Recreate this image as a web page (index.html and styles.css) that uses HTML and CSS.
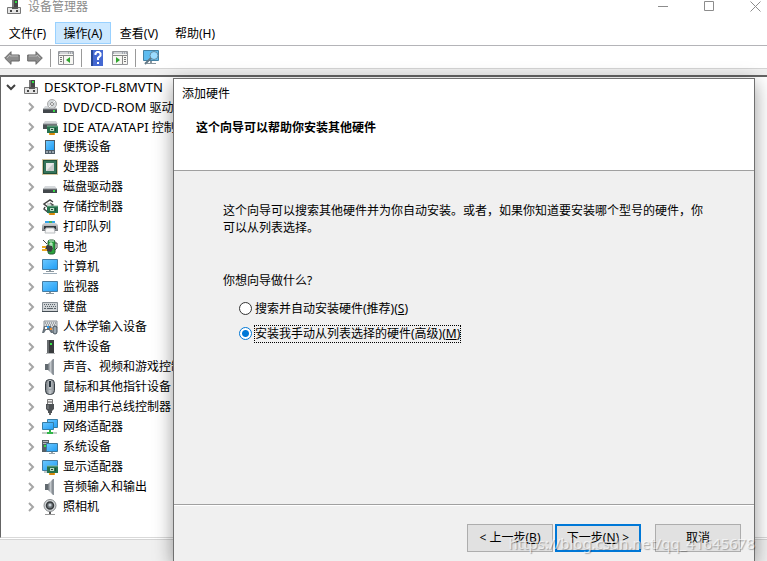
FILE: index.html
```html
<!DOCTYPE html>
<html lang="zh-CN">
<head>
<meta charset="utf-8">
<title>设备管理器</title>
<link rel="stylesheet" href="styles.css">
</head>
<body>
<svg class="defs" aria-hidden="true">
  <defs>
    <linearGradient id="blue" x1="0" y1="0" x2="1" y2="1"><stop offset="0" stop-color="#6cc8ff"/><stop offset="1" stop-color="#1f9df5"/></linearGradient>
    <linearGradient id="grey" x1="0" y1="0" x2="0" y2="1"><stop offset="0" stop-color="#d4d6d8"/><stop offset="1" stop-color="#777b7f"/></linearGradient>
    <linearGradient id="metal" x1="0" y1="0" x2="1" y2="0"><stop offset="0" stop-color="#6c7278"/><stop offset=".5" stop-color="#c3c8cc"/><stop offset="1" stop-color="#7c8288"/></linearGradient>
    <symbol id="closed" viewBox="0 0 8 10"><path d="M2 1l4 4-4 4" fill="none" stroke="#a6a6a6" stroke-width="2"/></symbol>
    <symbol id="open" viewBox="0 0 10 8"><path d="M1 2l4 4 4-4" fill="none" stroke="#404040" stroke-width="2"/></symbol>
    <symbol id="computer" viewBox="0 0 16 16"><path d="M6 1h6v9H6z" fill="#454545"/><path d="M6 1h2v9H6z" fill="#777"/><path d="M9 2h2v2H9z" fill="#2fdc42"/><path d="M1.500 8.500h13v6h-13z" fill="#e4e4e4" stroke="#777"/><path d="M6 8h6v2H6z" fill="#555"/><path d="M4 11h2v2H4zM10 11h2v2h-2z" fill="#444"/></symbol>
    <symbol id="drive" viewBox="0 0 16 16"><path d="M3 7h10l2 3H1z" fill="#d6d9dc"/><path d="M1 10h14v4H1z" fill="#42474b"/><path d="M1 10h14" stroke="#8a8e91"/><path d="M11 11h2v2h-2z" fill="#35db47"/></symbol>
    <symbol id="card" viewBox="0 0 16 16"><path d="M5 6h11v7H5z" fill="#27734f"/><path d="M5 6h11" stroke="#87b99c"/><path d="M8 8h4v3H8z" fill="#b9d9c4"/><path d="M9 9h2v1H9zM13 8h1v3h-1z" fill="#194e37"/><path d="M7 13h6v2H7z" fill="#f2a51a"/><path d="M9 13v2m2-2v2" stroke="#b96a08"/></symbol>
    <symbol id="dvd" viewBox="0 0 16 16"><use href="#drive"/><circle cx="10" cy="5" r="4.500" fill="#d4d8da" stroke="#aaa"/><path d="M10 5l3-3M10 5l-3 3" stroke="#fff"/><circle cx="10" cy="5" r="1.500" fill="#fff" stroke="#888"/></symbol>
    <symbol id="ide" viewBox="0 0 16 16"><path d="M3 2h11l2 3H1z" fill="#d2d5d7"/><path d="M1 5h14v5H1z" fill="#4b5154"/><path d="M1 5h14" stroke="#979b9e"/><use href="#card" y="1"/></symbol>
    <symbol id="portable" viewBox="0 0 16 16"><path d="M3 1h10v14H3z" fill="#4e5c67"/><path d="M4 2h8v9H4z" fill="url(#blue)"/><path d="M4 12h2v2H4zM7 12h2v2H7zM10 12h2v2h-2z" fill="#9aa5ad"/></symbol>
    <symbol id="cpu" viewBox="0 0 16 16"><path d="M.5.5h15v15H.5z" fill="none" stroke="#a88c40" stroke-dasharray="1 1"/><path d="M1 1h14v14H1z" fill="#205039"/><path d="M2 2h12v12H2z" fill="#35745a"/><path d="M4 4h8v8H4z" fill="#e8e8e8"/><path d="M12 4v8H4z" fill="#c8cccb"/></symbol>
    <symbol id="storage" viewBox="0 0 16 16"><path d="M11 3L8 1 2 5l5 4 4-3-3-2M3 8l-1 2 5 4" fill="none" stroke="#444" stroke-width="1.500"/><path d="M5 5h4" stroke="#aaa"/><use href="#card" y="1"/></symbol>
    <symbol id="printer" viewBox="0 0 16 16"><path d="M3 2h10v4H3z" fill="#33a5e9"/><path d="M7 2h3v3H7z" fill="#49b35b"/><path d="M2 4h12l2 2v6H0V6z" fill="url(#grey)"/><path d="M2 7h12v3H2z" fill="#33393e"/><path d="M4 9h8l1 5H3z" fill="#f7f7f7" stroke="#b9bdbf"/></symbol>
    <symbol id="battery" viewBox="0 0 16 16"><rect x="6" y="1" width="7" height="14" rx="2" fill="#27a33c" stroke="#245c31"/><path d="M7 2h5M8 4h2v7H8z" stroke="#d6edda" fill="#79dc83"/><path d="M13 4h2v5l-2 2M1 1l4 4" fill="none" stroke="#444"/><path d="M5 6l5 1 1 3-2 3-4-1-2-3z" fill="#3b3d40"/><path d="M0 8h4M0 11h5" stroke="#eba821" stroke-width="2"/></symbol>
    <symbol id="screen" viewBox="0 0 16 16"><path d="M.5 1.500h15v10H.5z" fill="url(#blue)" stroke="#467da3"/><path d="M7 12h2v1H7z" fill="#8a969d"/><path d="M4 13h8v1H4z" fill="#8a969d"/></symbol>
    <symbol id="pc" viewBox="0 0 16 16"><use href="#screen" y="-1"/><path d="M1 14h14v1H1z" fill="#9dacb8"/></symbol>
    <symbol id="monitor" viewBox="0 0 16 16"><use href="#screen" y="1"/></symbol>
    <symbol id="keyboard" viewBox="0 0 16 16"><path d="M.5 3.500h15v9H.5z" fill="#d0d4d7" stroke="#858d93"/><path d="M2 5.500h12M3 7.500h11" stroke="#59636a" stroke-dasharray="1 1"/><path d="M2 9.500h2m1 0h6m1 0h2" stroke="#59636a"/><path d="M0 12h16v1H0z" fill="#444d54"/></symbol>
    <symbol id="hid" viewBox="0 0 16 16"><path d="M2 2h13v7H2z" fill="#dadddf" stroke="#8b9399"/><path d="M3 4h11M4 6h10" stroke="#606a72" stroke-dasharray="1 1"/><path d="M2 7h7l2 7H9l-2-3H4l-2 3H0z" fill="#68727a"/><path d="M3 8l2 2m0-2L3 10" stroke="#fff"/><path d="M5 7h2v2H5z" fill="#2d9df0"/><path d="M8 9h2v2H8z" fill="#eb8e30"/><rect x="11" y="7" width="4" height="8" rx="2" fill="#9ca8b1" stroke="#45515a"/></symbol>
    <symbol id="software" viewBox="0 0 16 16"><path d="M5 1h7v13H5z" fill="#383b3d"/><path d="M5 1h2v13H5z" fill="#696d70"/><path d="M8 4h2v2H8z" fill="#39e548"/><path d="M4 14h9v1H4z" fill="#b7b9bb"/></symbol>
    <symbol id="speaker" viewBox="0 0 16 16"><path d="M3 5h3v6H3z" fill="#626a70"/><path d="M6 5l5-5v16l-5-5z" fill="url(#metal)"/><path d="M11 0h1v16h-1z" fill="#8c949b"/></symbol>
    <symbol id="mouse" viewBox="0 0 16 16"><rect x="3.500" y=".5" width="9" height="15" rx="4" fill="url(#metal)" stroke="#353c42"/><path d="M8 2v6" stroke="#27333c" stroke-width="2"/><path d="M5 9c2 2 4 2 6 0" fill="none" stroke="#929da5"/></symbol>
    <symbol id="usb" viewBox="0 0 16 16"><path d="M5.500.5h5v5h-5z" fill="#eee" stroke="#777"/><path d="M7 2v2m2-2v2" stroke="#555"/><path d="M4 5h8v5l-2 2v2H6v-2l-2-2z" fill="#4d5154"/><path d="M6 6v4" stroke="#85898c"/><path d="M7 14h2v2H7z" fill="#666"/></symbol>
    <symbol id="network" viewBox="0 0 16 16"><path d="M5.500.5h10v8h-10z" fill="url(#blue)" stroke="#367da5"/><path d="M.5 3.500h11v7H.5z" fill="url(#blue)" stroke="#367da5"/><path d="M7 11h2v2h2v2H5v-2h2z" fill="#31b649"/><path d="M0 13h5v2H0zM11 13h4v2h-4z" fill="#c6cec9"/></symbol>
    <symbol id="system" viewBox="0 0 16 16"><path d="M0 1h7v12H0z" fill="#555e64"/><path d="M1 2h5v1H1zM1 4h5v1H1z" fill="#b4b9bd"/><path d="M2 6h2v2H2z" fill="#36db48"/><path d="M4.500 4.500h11v8h-11z" fill="url(#blue)" stroke="#3e789c"/><path d="M9 13h2v1H9zM7 14h6v1H7z" fill="#98a3a9"/></symbol>
    <symbol id="display" viewBox="0 0 16 16"><path d="M.5 1.500h15v10H.5z" fill="url(#blue)" stroke="#467da3"/><path d="M2 13h5" stroke="#8a969d"/><use href="#card" y="1"/></symbol>
    <symbol id="camera" viewBox="0 0 16 16"><circle cx="8" cy="6.500" r="6" fill="#d2d5d7" stroke="#868a8d"/><circle cx="8" cy="6.500" r="3.500" fill="#70767a" stroke="#35393c" stroke-width="1.500"/><circle cx="8" cy="6" r="1.500" fill="#c7d0d5"/><path d="M7 13h2v2H7z" fill="#555"/><path d="M3 15h10v1H3z" fill="#999"/></symbol>
    <symbol id="arrow" viewBox="0 0 16 16"><path d="M.7 8L7 1.700V5h8.300v6H7v3.300z" fill="#8d8d8d" stroke="#676767"/><path d="M3 8l3-3v1h8" fill="none" stroke="#b7b7b7"/></symbol>
    <symbol id="panel" viewBox="0 0 16 16"><path d="M.5 1.500h15v13H.5z" fill="#f7f7f3" stroke="#95979b"/><path d="M1 2h14v2H1z" fill="#a3a8af"/><path d="M2 3h8m1 0h1m1 0h1" stroke="#fff"/><path d="M1 5.500h14" stroke="#888"/></symbol>
    <symbol id="left-panel" viewBox="0 0 16 16"><use href="#panel"/><path d="M5.500 6v8" stroke="#888"/><path d="M2 7.500h2m-2 2h2m-2 2h2" stroke="#777"/><path d="M12 7v6l-4-3z" fill="#2fa52d"/></symbol>
    <symbol id="right-panel" viewBox="0 0 16 16"><use href="#panel"/><path d="M10.500 6v8" stroke="#888"/><path d="M12 7.500h2m-2 2h2m-2 2h2" stroke="#777"/><path d="M4 7v6l4-3z" fill="#2fa52d"/></symbol>
    <symbol id="help" viewBox="0 0 16 16"><path d="M2 0h12v16H2z" fill="#4468d2"/><path d="M2 0h2v16H2z" fill="#284897"/><path d="M6.500 5V3.500L8 2h2l1.500 1.500v2L9 8v2" fill="none" stroke="#fff" stroke-width="2"/><path d="M8 12h2v2H8z" fill="#fff"/></symbol>
    <symbol id="scan" viewBox="0 0 16 16"><path d="M.5.5h15v10H.5z" fill="#5ebcf0" stroke="#4482a5"/><path d="M7 11h2v2h4v1H4v-1h3z" fill="#8997a0"/><circle cx="11" cy="5.500" r="4" fill="#9bdcff" stroke="#668ca2"/><path d="M8 8l-6 6" stroke="#617785" stroke-width="2"/></symbol>
  </defs>
</svg>
<div class="window">
  <header class="titlebar">
    <svg class="icon"><use href="#computer"/></svg>
    <h1>设备管理器</h1>
    <div class="window-controls">
      <button aria-label="最小化"><svg viewBox="0 0 11 11"><path d="M0 5.500h10"/></svg></button>
      <button aria-label="最大化"><svg viewBox="0 0 11 11"><path d="M.5.5h9v9h-9z"/></svg></button>
      <button aria-label="关闭"><svg viewBox="0 0 11 11"><path d="M.5.5l10 10m0-10l-10 10"/></svg></button>
    </div>
  </header>
  <nav class="menubar">
    <button>文件(F)</button><button class="active">操作(A)</button><button>查看(V)</button><button>帮助(H)</button>
  </nav>
  <div class="toolbar">
    <button aria-label="后退"><svg class="icon"><use href="#arrow"/></svg></button>
    <button aria-label="前进"><svg class="icon flip"><use href="#arrow"/></svg></button>
    <span class="separator"></span>
    <button aria-label="控制台树"><svg class="icon"><use href="#left-panel"/></svg></button>
    <span class="separator"></span>
    <button aria-label="帮助"><svg class="icon"><use href="#help"/></svg></button>
    <button aria-label="操作窗格"><svg class="icon"><use href="#right-panel"/></svg></button>
    <span class="separator"></span>
    <button aria-label="扫描硬件"><svg class="icon"><use href="#scan"/></svg></button>
  </div>
  <main class="tree">
    <div class="node root"><button aria-label="折叠"><svg class="chevron"><use href="#open"/></svg></button><svg class="icon"><use href="#computer"/></svg><span class="latin">DESKTOP-FL8MVTN</span></div>
    <ul>
      <li class="node"><button aria-label="展开"><svg class="chevron"><use href="#closed"/></svg></button><svg class="icon"><use href="#dvd"/></svg><span><span class="latin">DVD/CD-ROM</span> 驱动器</span></li>
      <li class="node"><button aria-label="展开"><svg class="chevron"><use href="#closed"/></svg></button><svg class="icon"><use href="#ide"/></svg><span><span class="latin">IDE ATA/ATAPI</span> 控制器</span></li>
      <li class="node"><button aria-label="展开"><svg class="chevron"><use href="#closed"/></svg></button><svg class="icon"><use href="#portable"/></svg><span>便携设备</span></li>
      <li class="node"><button aria-label="展开"><svg class="chevron"><use href="#closed"/></svg></button><svg class="icon"><use href="#cpu"/></svg><span>处理器</span></li>
      <li class="node"><button aria-label="展开"><svg class="chevron"><use href="#closed"/></svg></button><svg class="icon"><use href="#drive"/></svg><span>磁盘驱动器</span></li>
      <li class="node"><button aria-label="展开"><svg class="chevron"><use href="#closed"/></svg></button><svg class="icon"><use href="#storage"/></svg><span>存储控制器</span></li>
      <li class="node"><button aria-label="展开"><svg class="chevron"><use href="#closed"/></svg></button><svg class="icon"><use href="#printer"/></svg><span>打印队列</span></li>
      <li class="node"><button aria-label="展开"><svg class="chevron"><use href="#closed"/></svg></button><svg class="icon"><use href="#battery"/></svg><span>电池</span></li>
      <li class="node"><button aria-label="展开"><svg class="chevron"><use href="#closed"/></svg></button><svg class="icon"><use href="#pc"/></svg><span>计算机</span></li>
      <li class="node"><button aria-label="展开"><svg class="chevron"><use href="#closed"/></svg></button><svg class="icon"><use href="#monitor"/></svg><span>监视器</span></li>
      <li class="node"><button aria-label="展开"><svg class="chevron"><use href="#closed"/></svg></button><svg class="icon"><use href="#keyboard"/></svg><span>键盘</span></li>
      <li class="node"><button aria-label="展开"><svg class="chevron"><use href="#closed"/></svg></button><svg class="icon"><use href="#hid"/></svg><span>人体学输入设备</span></li>
      <li class="node"><button aria-label="展开"><svg class="chevron"><use href="#closed"/></svg></button><svg class="icon"><use href="#software"/></svg><span>软件设备</span></li>
      <li class="node"><button aria-label="展开"><svg class="chevron"><use href="#closed"/></svg></button><svg class="icon"><use href="#speaker"/></svg><span>声音、视频和游戏控制器</span></li>
      <li class="node"><button aria-label="展开"><svg class="chevron"><use href="#closed"/></svg></button><svg class="icon"><use href="#mouse"/></svg><span>鼠标和其他指针设备</span></li>
      <li class="node"><button aria-label="展开"><svg class="chevron"><use href="#closed"/></svg></button><svg class="icon"><use href="#usb"/></svg><span>通用串行总线控制器</span></li>
      <li class="node"><button aria-label="展开"><svg class="chevron"><use href="#closed"/></svg></button><svg class="icon"><use href="#network"/></svg><span>网络适配器</span></li>
      <li class="node"><button aria-label="展开"><svg class="chevron"><use href="#closed"/></svg></button><svg class="icon"><use href="#system"/></svg><span>系统设备</span></li>
      <li class="node"><button aria-label="展开"><svg class="chevron"><use href="#closed"/></svg></button><svg class="icon"><use href="#display"/></svg><span>显示适配器</span></li>
      <li class="node"><button aria-label="展开"><svg class="chevron"><use href="#closed"/></svg></button><svg class="icon"><use href="#speaker"/></svg><span>音频输入和输出</span></li>
      <li class="node"><button aria-label="展开"><svg class="chevron"><use href="#closed"/></svg></button><svg class="icon"><use href="#camera"/></svg><span>照相机</span></li>
    </ul>
  </main>
  <footer class="statusbar"></footer>
</div>
<form class="dialog">
  <header>
    <h2>添加硬件</h2>
    <h3>这个向导可以帮助你安装其他硬件</h3>
  </header>
  <section>
    <p>这个向导可以搜索其他硬件并为你自动安装。或者，如果你知道要安装哪个型号的硬件，你可以从列表选择。</p>
    <fieldset>
      <legend>你想向导做什么?</legend>
      <div class="option"><input type="radio" name="mode" id="auto"><label for="auto">搜索并自动安装硬件(推荐)(<u>S</u>)</label></div>
      <div class="option"><input type="radio" name="mode" id="manual" checked><label for="manual">安装我手动从列表选择的硬件(高级)(<u>M</u>)</label></div>
    </fieldset>
  </section>
  <footer>
    <button type="button">&lt; 上一步(<u>B</u>)</button>
    <button type="button" class="primary">下一步(<u>N</u>) &gt;</button>
    <button type="button" class="cancel">取消</button>
  </footer>
</form>
<div class="watermark">https://blog.csdn.net/qq_41645678</div>
</body>
</html>
```
FILE: styles.css
```css
* { box-sizing: border-box; }
body {
  margin: 0;
  height: 100vh;
  position: relative;
  overflow: hidden;
  background: #fff;
  color: #000;
  font: 12px/16px "Noto Sans", "Noto Sans CJK SC", sans-serif;
}
button { font: inherit; color: inherit; border: 0; padding: 0; background: none; }
h1, h2, h3, p, ul { margin: 0; padding: 0; font-size: 12px; font-weight: 400; }
ul { list-style: none; }
svg { display: block; flex: none; }
.defs { position: absolute; width: 0; height: 0; }
.icon { width: 16px; height: 16px; }
.flip { transform: scaleX(-1); }
.latin { font-size: 13px; }

.window { height: 100%; display: flex; flex-direction: column; }
.titlebar { height: 22px; padding: 0 6px; display: flex; align-items: flex-start; gap: 6px; color: #8c8c8c; line-height: 14px; }
.titlebar .icon { margin-top: -1px; }
.window-controls { margin-left: auto; display: flex; gap: 35px; }
.window-controls button { padding-top: 1px; }
.window-controls svg { width: 11px; height: 11px; fill: none; stroke: #8c8c8c; }

.menubar { height: 24px; padding-left: 0; display: flex; align-items: flex-start; border-bottom: 1px solid #b4b4b8; }
.menubar button { height: 22px; width: 56px; padding-top: 2px; border: 1px solid transparent; }
.menubar button:first-child { width: 55px; }
.menubar .active { background: #cce8ff; border-color: #99d1ff; }

.toolbar { height: 23px; padding: 2px 4px 0; display: flex; align-items: center; gap: 7px; border-bottom: 1px solid #d4d4d4; }
.separator { width: 1px; height: 18px; background: #999; }

.tree { flex: 1; min-height: 0; overflow: hidden; margin-top: 6px; border: 1px solid #646464; border-top-width: 2px; border-right: 0; border-bottom-color: #d9d9d9; background: #fff; box-shadow: 0 -6px #efefef; }
.node { display: flex; align-items: center; height: 20px; padding-left: 26px; white-space: nowrap; }
.node .icon { margin: 0 5px 0 7px; }
.node .chevron { width: 8px; height: 10px; }
.root { padding-left: 5px; }
.root .chevron { width: 10px; height: 8px; }
.statusbar { height: 22px; margin-top: 1px; background: #f0f0f0; border-top: 1px solid #d4d4d4; }

.dialog {
  position: absolute;
  inset: 78px 12px 0 173px;
  display: flex;
  flex-direction: column;
  background: #f0f0f0;
  border: 1px solid #707070;
  border-bottom: 0;
  box-shadow: 0 5px 18px rgba(0, 0, 0, .4);
}
.dialog > header { height: 92px; padding: 7px 8px; background: #fff; border-bottom: 1px solid #a0a0a0; }
.dialog h3 { margin: 18px 14px; font-weight: 700; }
.dialog section { flex: 1; min-height: 0; padding: 31px 48px 0 49px; border-bottom: 1px solid #a0a0a0; }
.dialog p { line-height: 17px; }
fieldset { border: 0; margin: 37px 0 0; padding: 0; min-width: 0; }
legend { padding: 0; margin-bottom: 7px; }
.option { height: 25px; display: flex; align-items: center; gap: 2px; padding-left: 16px; }
.option input { width: 13px; height: 13px; margin: 0; appearance: none; border: 1px solid #333; border-radius: 50%; background: #fff; }
.option input:checked { border-color: #0078d7; background: radial-gradient(circle, #0078d7 0 3px, #fff 4px); }
.option label { height: 18px; border: 1px dotted transparent; }
.option input:checked + label { border-color: #000; }
.dialog > footer { height: 56px; flex: none; display: flex; justify-content: flex-end; align-items: flex-start; gap: 2px; padding: 18px 13px 0; border-top: 1px solid #fff; }
.dialog > footer button { width: 86px; height: 28px; background: #e1e1e1; border: 1px solid #adadad; }
.dialog > footer .primary { border: 2px solid #0078d7; }
.dialog > footer .cancel { margin-left: 12px; }

.watermark { position: absolute; right: 12px; bottom: 8px; font-size: 15px; line-height: 20px; color: rgba(255, 255, 255, .65); text-shadow: 1px 1px 1px rgba(0, 0, 0, .3); pointer-events: none; }
```
